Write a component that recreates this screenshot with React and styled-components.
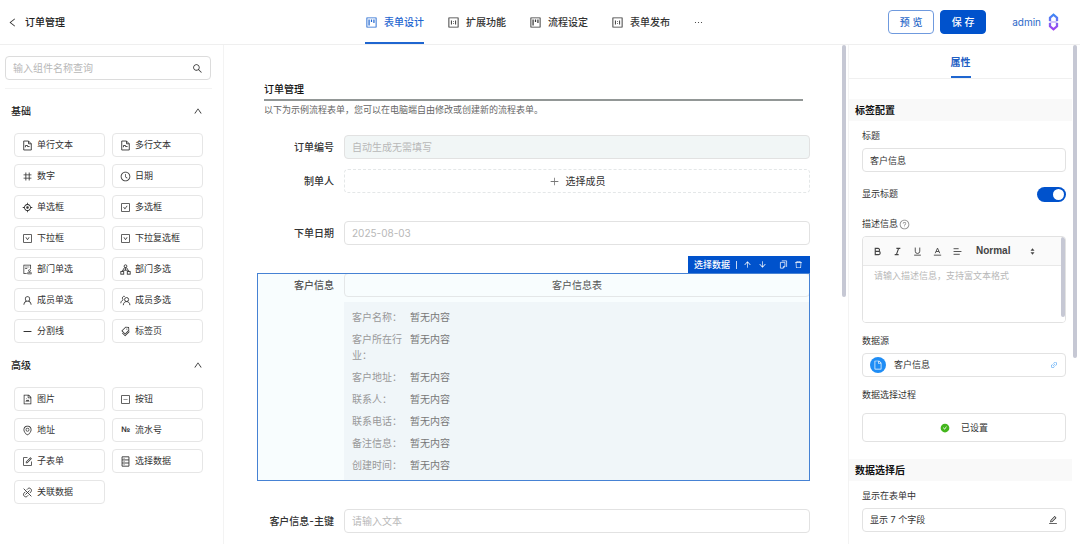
import React, { useState } from 'react'
import styled, { createGlobalStyle } from 'styled-components'
import {
  AiOutlineLeft,
  AiOutlineUp,
  AiOutlineSearch,
  AiOutlineProject,
  AiOutlineOneToOne,
  AiOutlineEllipsis,
  AiOutlineNumber,
  AiOutlineClockCircle,
  AiOutlineAim,
  AiOutlineCheckSquare,
  AiOutlineDownSquare,
  AiOutlineAudit,
  AiOutlineUser,
  AiOutlineMinus,
  AiOutlineTags,
  AiOutlineFileImage,
  AiOutlineMinusSquare,
  AiOutlineEnvironment,
  AiOutlineForm,
  AiOutlinePlus,
  AiOutlineArrowUp,
  AiOutlineArrowDown,
  AiOutlineDelete,
  AiOutlineQuestionCircle,
  AiOutlineFile,
  AiOutlineLink,
  AiFillCheckCircle,
  AiOutlineEdit,
} from 'react-icons/ai'

const Svg = ({ children, w = 1.3 }) => (
  <svg width="1em" height="1em" viewBox="0 0 16 16" fill="none" stroke="currentColor" strokeWidth={w}>
    {children}
  </svg>
)

const TextDocIcon = () => (
  <Svg>
    <path d="M2.5 1.5h7l4 4v9h-11zM9.5 1.5v4h4" />
    <path d="M5 10.5V8h3v1.5h3" />
  </Svg>
)

const DeptIcon = () => (
  <Svg>
    <circle cx="8" cy="3.2" r="2" />
    <path d="M5 8.2c0-4 6-4 6 0M8 6v3M3.5 11V9h9v2" />
    <rect x="1.2" y="11" width="4.2" height="3.8" />
    <rect x="10.6" y="11" width="4.2" height="3.8" />
  </Svg>
)

const MembersIcon = () => (
  <Svg>
    <circle cx="9.6" cy="6.6" r="2.9" />
    <path d="M4.8 14.8c0-7 9.6-7 9.6 0M7 2.2C4.4.8 2 4.6 4.6 6.8M1.2 12c0-2.2 1.2-3.8 3.2-4.8" />
  </Svg>
)

const StackIcon = () => (
  <Svg>
    <path d="M3 1.2h10v13.6H3zM3 5.7h10M3 10.2h10M5.4 3.5h1M5.4 8h1M5.4 12.5h1" />
  </Svg>
)

const RelationIcon = () => (
  <Svg>
    <path d="M7 4l2-2c2-1.6 6 1.4 4.4 4.4l-2 2.4M9 12l-2 2c-2.4 1.4-6-1.6-4.4-4.6L4.8 7M11 5l-6 6M2.4 2.4l11.2 11.2" />
  </Svg>
)

const CopyIcon = () => (
  <Svg>
    <path d="M5 1.5h8.5v10.8M2.5 4.2h8v7.3l-2.8 3H2.5zM10.5 11.5H7.7v3" />
  </Svg>
)

const SortIcon = () => (
  <svg width="5" height="7" viewBox="0 0 6 8" fill="#444">
    <path d="M3 0l2.4 3H.6zM3 8L.6 5h4.8z" />
  </svg>
)

const BrandLogo = () => (
  <svg width="11" height="18" viewBox="0 0 22 36" fill="none" strokeWidth="4.6">
    <defs>
      <linearGradient id="brand" x1="0" y1="0" x2="0" y2="36" gradientUnits="userSpaceOnUse">
        <stop offset="0" stopColor="#2f8cf5" />
        <stop offset="0.5" stopColor="#7a6cf3" />
        <stop offset="1" stopColor="#a436ee" />
      </linearGradient>
    </defs>
    <path d="M4 16V9.500l7-6 7 6V16M4 20v6.500l7 6 7-6V20" stroke="url(#brand)" />
    <path d="M3 18h16" stroke="#c3b4f8" strokeWidth="3" />
  </svg>
)

const NumberMark = () => <MarkText>№</MarkText>

const tabs = [
  { name: '表单设计', icon: <AiOutlineProject /> },
  { name: '扩展功能', icon: <AiOutlineOneToOne /> },
  { name: '流程设定', icon: <AiOutlineProject /> },
  { name: '表单发布', icon: <AiOutlineOneToOne /> },
]

const groups = [
  {
    title: '基础',
    items: [
      ['单行文本', <TextDocIcon />],
      ['多行文本', <TextDocIcon />],
      ['数字', <AiOutlineNumber />],
      ['日期', <AiOutlineClockCircle />],
      ['单选框', <AiOutlineAim />],
      ['多选框', <AiOutlineCheckSquare />],
      ['下拉框', <AiOutlineDownSquare />],
      ['下拉复选框', <AiOutlineDownSquare />],
      ['部门单选', <AiOutlineAudit />],
      ['部门多选', <DeptIcon />],
      ['成员单选', <AiOutlineUser />],
      ['成员多选', <MembersIcon />],
      ['分割线', <AiOutlineMinus />],
      ['标签页', <AiOutlineTags />],
    ],
  },
  {
    title: '高级',
    items: [
      ['图片', <AiOutlineFileImage />],
      ['按钮', <AiOutlineMinusSquare />],
      ['地址', <AiOutlineEnvironment />],
      ['流水号', <NumberMark />],
      ['子表单', <AiOutlineForm />],
      ['选择数据', <StackIcon />],
      ['关联数据', <RelationIcon />],
    ],
  },
]

const details = ['客户名称', '客户所在行业', '客户地址', '联系人', '联系电话', '备注信息', '创建时间']

function Header() {
  const [active, setActive] = useState(0)
  return (
    <TopBar>
      <TopLeft>
        <IconButton aria-label="返回"><AiOutlineLeft /></IconButton>
        <PageName>订单管理</PageName>
      </TopLeft>
      <TopTabs>
        {tabs.map((tab, index) => (
          <TopTab key={tab.name} $active={index === active} onClick={() => setActive(index)}>
            {tab.icon}
            {tab.name}
          </TopTab>
        ))}
        <MoreButton aria-label="更多"><AiOutlineEllipsis /></MoreButton>
      </TopTabs>
      <TopRight>
        <ActionButton>预 览</ActionButton>
        <ActionButton $primary>保 存</ActionButton>
        <UserLink href="#">
          admin
          <BrandLogo />
        </UserLink>
      </TopRight>
    </TopBar>
  )
}

function Sidebar() {
  return (
    <Aside>
      <SearchArea>
        <SearchBox>
          <input type="text" placeholder="输入组件名称查询" aria-label="输入组件名称查询" />
          <AiOutlineSearch />
        </SearchBox>
      </SearchArea>
      {groups.map((group) => (
        <section key={group.title}>
          <GroupTitle>
            {group.title}
            <AiOutlineUp />
          </GroupTitle>
          <Widgets>
            {group.items.map(([name, icon]) => (
              <Widget key={name}>
                {icon}
                {name}
              </Widget>
            ))}
          </Widgets>
        </section>
      ))}
    </Aside>
  )
}

function Canvas() {
  return (
    <Main>
      <FormTitle>订单管理</FormTitle>
      <FormDesc>以下为示例流程表单，您可以在电脑端自由修改或创建新的流程表单。</FormDesc>
      <Field $tight>
        <FieldLabel htmlFor="orderNo">订单编号</FieldLabel>
        <TextInput id="orderNo" placeholder="自动生成无需填写" disabled />
      </Field>
      <Field>
        <FieldLabel htmlFor="maker">制单人</FieldLabel>
        <PickButton id="maker" $dashed>
          <AiOutlinePlus />
          选择成员
        </PickButton>
      </Field>
      <Field>
        <FieldLabel htmlFor="orderDate">下单日期</FieldLabel>
        <TextInput id="orderDate" placeholder="2025-08-03" />
      </Field>
      <Field $selected>
        <FieldLabel htmlFor="customer">客户信息</FieldLabel>
        <div>
          <PickButton id="customer">客户信息表</PickButton>
          <Details>
            {details.map((name) => (
              <React.Fragment key={name}>
                <dt>{name}：</dt>
                <dd>暂无内容</dd>
              </React.Fragment>
            ))}
          </Details>
        </div>
        <FieldTools>
          <b>选择数据</b>
          <i />
          <button aria-label="上移"><AiOutlineArrowUp /></button>
          <button aria-label="下移"><AiOutlineArrowDown /></button>
          <ToolGap />
          <button aria-label="复制"><CopyIcon /></button>
          <button aria-label="删除"><AiOutlineDelete /></button>
        </FieldTools>
      </Field>
      <Field>
        <FieldLabel htmlFor="customerKey">客户信息-主键</FieldLabel>
        <TextInput id="customerKey" placeholder="请输入文本" />
      </Field>
      <CanvasThumb />
    </Main>
  )
}

function Properties() {
  const [showTitle, setShowTitle] = useState(true)
  return (
    <Panel>
      <PanelTabs>
        <PanelTab>属性</PanelTab>
      </PanelTabs>
      <PanelHeading>标签配置</PanelHeading>
      <PanelBody>
        <PropLabel htmlFor="title">标题</PropLabel>
        <PropInput id="title" defaultValue="客户信息" />
        <SwitchRow>
          <label htmlFor="showTitle">显示标题</label>
          <Switch
            id="showTitle"
            type="checkbox"
            checked={showTitle}
            onChange={(e) => setShowTitle(e.target.checked)}
          />
        </SwitchRow>
        <PropLabel htmlFor="desc">
          描述信息
          <AiOutlineQuestionCircle />
        </PropLabel>
        <Editor>
          <EditorBar>
            <button aria-label="加粗">
              <Svg w={2}><path d="M4 2.5h5a2.6 2.6 0 0 1 0 5.3H4zM4 7.8h6a2.8 2.8 0 0 1 0 5.7H4z" /></Svg>
            </button>
            <button aria-label="斜体">
              <Svg w={2}><path d="M6 2.5h7M3 13.5h7M10 2.5l-4 11" /></Svg>
            </button>
            <button aria-label="下划线">
              <Svg w={1.6}><path d="M4 1v6.5a4 4 0 0 0 8 0V1M2 14.5h12" /></Svg>
            </button>
            <button aria-label="颜色">
              <Svg w={1.6}><path d="M4 11l4-9 4 9M5.4 8h5.2M1.5 14.5h13" /></Svg>
            </button>
            <button aria-label="对齐">
              <Svg w={1.6}><path d="M1 3h9M1 8h14M1 13h11" /></Svg>
            </button>
            <SizeSelect>
              <select aria-label="字号" defaultValue="Normal">
                <option>Normal</option>
              </select>
              <SortIcon />
            </SizeSelect>
          </EditorBar>
          <textarea id="desc" placeholder="请输入描述信息，支持富文本格式" />
          <EditorThumb />
        </Editor>
        <PropLabel as="div">数据源</PropLabel>
        <PropButton>
          <SourceBadge><AiOutlineFile /></SourceBadge>
          客户信息
          <LinkMark><AiOutlineLink /></LinkMark>
        </PropButton>
        <PropLabel as="div">数据选择过程</PropLabel>
        <StatusButton>
          <AiFillCheckCircle />
          已设置
        </StatusButton>
      </PanelBody>
      <PanelHeading>数据选择后</PanelHeading>
      <PanelBody>
        <PropLabel as="div">显示在表单中</PropLabel>
        <PropButton>
          显示 7 个字段
          <EditMark><AiOutlineEdit /></EditMark>
        </PropButton>
      </PanelBody>
      <PanelThumb />
    </Panel>
  )
}

export default function App() {
  return (
    <Page>
      <GlobalStyle />
      <Header />
      <Sidebar />
      <Canvas />
      <Properties />
    </Page>
  )
}

const GlobalStyle = createGlobalStyle`
  * {
    box-sizing: border-box;
  }
  body {
    margin: 0;
    background: #fff;
    color: #333;
    font: 10px/16px Inter, "Noto Sans CJK SC", sans-serif;
  }
  button, input, textarea, select {
    font: inherit;
    color: inherit;
    margin: 0;
  }
  button {
    cursor: pointer;
  }
  svg {
    flex: none;
    display: block;
  }
  ::placeholder {
    color: #b8b8b8;
    opacity: 1;
  }
`
const Page = styled.div`
  display: grid;
  grid-template-columns: 224px minmax(0, 1fr) 232px;
  grid-template-rows: 45px minmax(0, 1fr);
  height: 100vh;
  overflow: hidden;
`
const TopBar = styled.header`
  grid-column: 1 / -1;
  display: grid;
  grid-template-columns: 1fr auto 1fr;
  border-bottom: 1px solid #efefef;
`
const TopLeft = styled.div`
  display: flex;
  align-items: center;
  gap: 7px;
  padding-left: 7px;
`
const IconButton = styled.button`
  padding: 0;
  border: 0;
  background: none;
  font-size: 11px;
`
const PageName = styled.h1`
  margin: 0;
  font-size: 10px;
  font-weight: 500;
  color: #222;
`
const TopTabs = styled.nav`
  display: flex;
  gap: 23px;
`
const TopTab = styled.button`
  display: flex;
  align-items: center;
  gap: 6px;
  padding: 0;
  border: 0;
  border-top: 2px solid transparent;
  border-bottom: 2px solid ${(props) => (props.$active ? '#1f66d0' : 'transparent')};
  background: none;
  font-weight: 500;
  color: ${(props) => (props.$active ? '#1f66d0' : '#333')};

  svg {
    font-size: 13px;
  }
`
const MoreButton = styled(IconButton)`
  padding-right: 11px;
`
const TopRight = styled.div`
  display: flex;
  align-items: center;
  justify-content: flex-end;
  gap: 6px;
  padding-right: 21px;
`
const ActionButton = styled.button`
  width: 46px;
  height: 24px;
  padding: 0;
  border: 1px solid ${(props) => (props.$primary ? '#0052cc' : '#6f9ade')};
  border-radius: 4px;
  background: ${(props) => (props.$primary ? '#0052cc' : '#fff')};
  color: ${(props) => (props.$primary ? '#fff' : '#2b69c8')};
  font-weight: 500;
`
const UserLink = styled.a`
  display: flex;
  align-items: center;
  gap: 7px;
  margin-left: 20px;
  color: #2b69c8;
  text-decoration: none;
`
const Aside = styled.aside`
  border-right: 1px solid #f3f3f3;
`
const SearchArea = styled.div`
  margin: 0 11px 0 5px;
  padding: 11px 1px 8px 0;
  border-bottom: 1px solid #f3f3f3;
`
const SearchBox = styled.label`
  display: flex;
  align-items: center;
  height: 24px;
  padding: 0 7px;
  border: 1px solid #dcdcdc;
  border-radius: 4px;

  svg {
    font-size: 11px;
  }
  input {
    flex: 1;
    min-width: 0;
    padding: 0;
    border: 0;
    outline: 0;
    background: none;
  }
`
const GroupTitle = styled.h2`
  display: flex;
  align-items: center;
  justify-content: space-between;
  height: 20px;
  margin: 12px 20px 12px 11px;
  font-size: 10px;
  font-weight: 500;
  color: #222;
`
const Widgets = styled.div`
  display: grid;
  grid-template-columns: 1fr 1fr;
  gap: 7px;
  padding: 0 20px 0 14px;
`
const Widget = styled.button`
  display: flex;
  align-items: center;
  gap: 4px;
  height: 24px;
  padding: 0 7px;
  border: 1px solid #e6e6e6;
  border-radius: 4px;
  background: #fff;
  font-size: 9px;
  white-space: nowrap;

  svg {
    font-size: 11px;
  }
`
const MarkText = styled.span`
  width: 11px;
  font: bold 8px/16px "Liberation Sans", sans-serif;
`
const Main = styled.main`
  position: relative;
  padding: 34px 38px 0 33px;
`
const FormTitle = styled.h2`
  margin: 0 7px;
  border-bottom: 2px solid #929796;
  font-size: 10px;
  font-weight: 500;
  line-height: 20px;
  color: #111;
`
const FormDesc = styled.p`
  margin: 0 7px 16px;
  font-size: 9px;
  line-height: 18px;
  color: #666;
`
const Field = styled.div`
  position: relative;
  display: grid;
  grid-template-columns: 77px minmax(0, 1fr);
  column-gap: 10px;
  margin-bottom: ${(props) => (props.$tight ? '10px' : '28px')};
  background: ${(props) => (props.$selected ? '#f8fdfe' : 'none')};
  color: ${(props) => (props.$selected ? '#555' : '#333')};

  &::after {
    content: "";
    display: ${(props) => (props.$selected ? 'block' : 'none')};
    position: absolute;
    inset: 0;
    border: 1px solid #4682d4;
    pointer-events: none;
  }
`
const FieldLabel = styled.label`
  font-weight: 500;
  line-height: 24px;
  text-align: right;
  white-space: nowrap;
`
const TextInput = styled.input`
  width: 100%;
  height: 24px;
  padding: 0 7px;
  border: 1px solid #e2e2e2;
  border-radius: 4px;
  background: #fff;

  &:disabled {
    background: #f1f6f6;
  }
`
const PickButton = styled.button`
  display: flex;
  align-items: center;
  justify-content: center;
  gap: 6px;
  width: 100%;
  height: 24px;
  border: 1px ${(props) => (props.$dashed ? 'dashed' : 'solid')} #e4e7e8;
  border-radius: 4px;
  background: none;

  svg {
    color: #777;
    font-size: 11px;
  }
`
const Details = styled.dl`
  display: grid;
  grid-template-columns: 50px 1fr;
  gap: 6px 8px;
  margin: 5px 0 0;
  padding: 7px 8px 8px;
  background: #f0f6f9;

  dt {
    color: #999;
  }
  dd {
    margin: 0;
    color: #777;
  }
`
const FieldTools = styled.div`
  position: absolute;
  right: 0;
  bottom: 100%;
  display: flex;
  align-items: center;
  gap: 6px;
  height: 17px;
  padding: 0 7px 0 6px;
  background: #0052cc;
  color: #fff;
  font-size: 9px;

  b {
    font-weight: 500;
  }
  i {
    width: 1px;
    height: 8px;
    background: #c5d8f5;
  }
  button {
    padding: 0;
    border: 0;
    background: none;
  }
`
const ToolGap = styled.span`
  width: 0;
`
const Thumb = styled.div`
  position: absolute;
  width: 4px;
  border-radius: 2px;
  background: #c6c8d4;
`
const CanvasThumb = styled(Thumb)`
  top: 0;
  right: 2px;
  height: 252px;
`
const Panel = styled.aside`
  position: relative;
  padding-right: 8px;
  border-left: 1px solid #f3f3f3;
  font-size: 9px;
`
const PanelThumb = styled(Thumb)`
  top: 0;
  right: 3px;
  height: 313px;
`
const PanelTabs = styled.nav`
  display: flex;
  justify-content: center;
  height: 34px;
  margin-bottom: 20px;
  border-bottom: 1px solid #f0f0f0;
`
const PanelTab = styled.button`
  padding: 0;
  border: 0;
  border-top: 2px solid transparent;
  border-bottom: 2px solid #1f66d0;
  background: none;
  color: #1f5fc4;
  font-size: 10px;
  font-weight: 700;
`
const PanelHeading = styled.h3`
  margin: 0;
  padding-left: 6px;
  background: #f9f9f9;
  color: #111;
  font-size: 10px;
  font-weight: 700;
  line-height: 22px;
`
const PanelBody = styled.div`
  padding: 7px 6px 17px 13px;
`
const PropLabel = styled.label`
  display: flex;
  align-items: center;
  gap: 1px;
  margin-bottom: 4px;

  svg {
    font-size: 11px;
    color: #888;
  }
`
const PropInput = styled.input`
  display: block;
  width: 100%;
  height: 24px;
  padding: 0 7px;
  border: 1px solid #e2e2e2;
  border-radius: 4px;
`
const SwitchRow = styled.div`
  display: flex;
  align-items: center;
  justify-content: space-between;
  margin: 14px 0;
`
const Switch = styled.input`
  appearance: none;
  width: 29px;
  height: 15px;
  padding: 2px;
  border-radius: 8px;
  background: ${(props) => (props.checked ? '#0052cc' : '#bbb')};
  cursor: pointer;

  &::before {
    content: "";
    display: block;
    width: 11px;
    height: 11px;
    margin-left: ${(props) => (props.checked ? '14px' : '0')};
    border-radius: 50%;
    background: #fff;
  }
`
const Editor = styled.div`
  position: relative;
  height: 87px;
  margin-bottom: 10px;
  border: 1px solid #e2e2e2;
  border-radius: 4px;
  overflow: hidden;

  textarea {
    display: block;
    width: 100%;
    height: 56px;
    padding: 2px 11px;
    border: 0;
    outline: 0;
    resize: none;
  }
`
const EditorBar = styled.div`
  display: flex;
  align-items: center;
  gap: 11px;
  height: 29px;
  padding: 0 10px;
  border-bottom: 1px solid #e8e8e8;
  background: #fafafa;
  color: #444;

  button {
    padding: 0;
    border: 0;
    background: none;
    font-size: 9px;
  }
`
const SizeSelect = styled.span`
  display: flex;
  align-items: center;
  margin-left: 3px;

  select {
    width: 54px;
    padding: 0;
    border: 0;
    background: none;
    appearance: none;
    font: bold 10px/16px "Liberation Sans", sans-serif;
  }
`
const EditorThumb = styled(Thumb)`
  top: 0;
  right: 0;
  height: 80px;
`
const PropButton = styled.button`
  display: flex;
  align-items: center;
  gap: 8px;
  width: 100%;
  height: 24px;
  margin-bottom: 10px;
  padding: 0 7px;
  border: 1px solid #e2e2e2;
  border-radius: 4px;
  background: #fff;
`
const SourceBadge = styled.span`
  display: grid;
  place-items: center;
  width: 16px;
  height: 16px;
  border-radius: 50%;
  background: #1f8df5;
  color: #fff;
  font-size: 10px;
`
const LinkMark = styled.span`
  margin-left: auto;
  color: #3f9bf3;
  font-size: 8px;
`
const EditMark = styled.span`
  margin-left: auto;
  font-size: 10px;
`
const StatusButton = styled.button`
  display: flex;
  align-items: center;
  justify-content: center;
  gap: 11px;
  width: 100%;
  height: 29px;
  margin-top: 10px;
  border: 1px solid #e2e2e2;
  border-radius: 4px;
  background: #fff;

  svg {
    font-size: 10px;
    color: #43b61c;
  }
`
